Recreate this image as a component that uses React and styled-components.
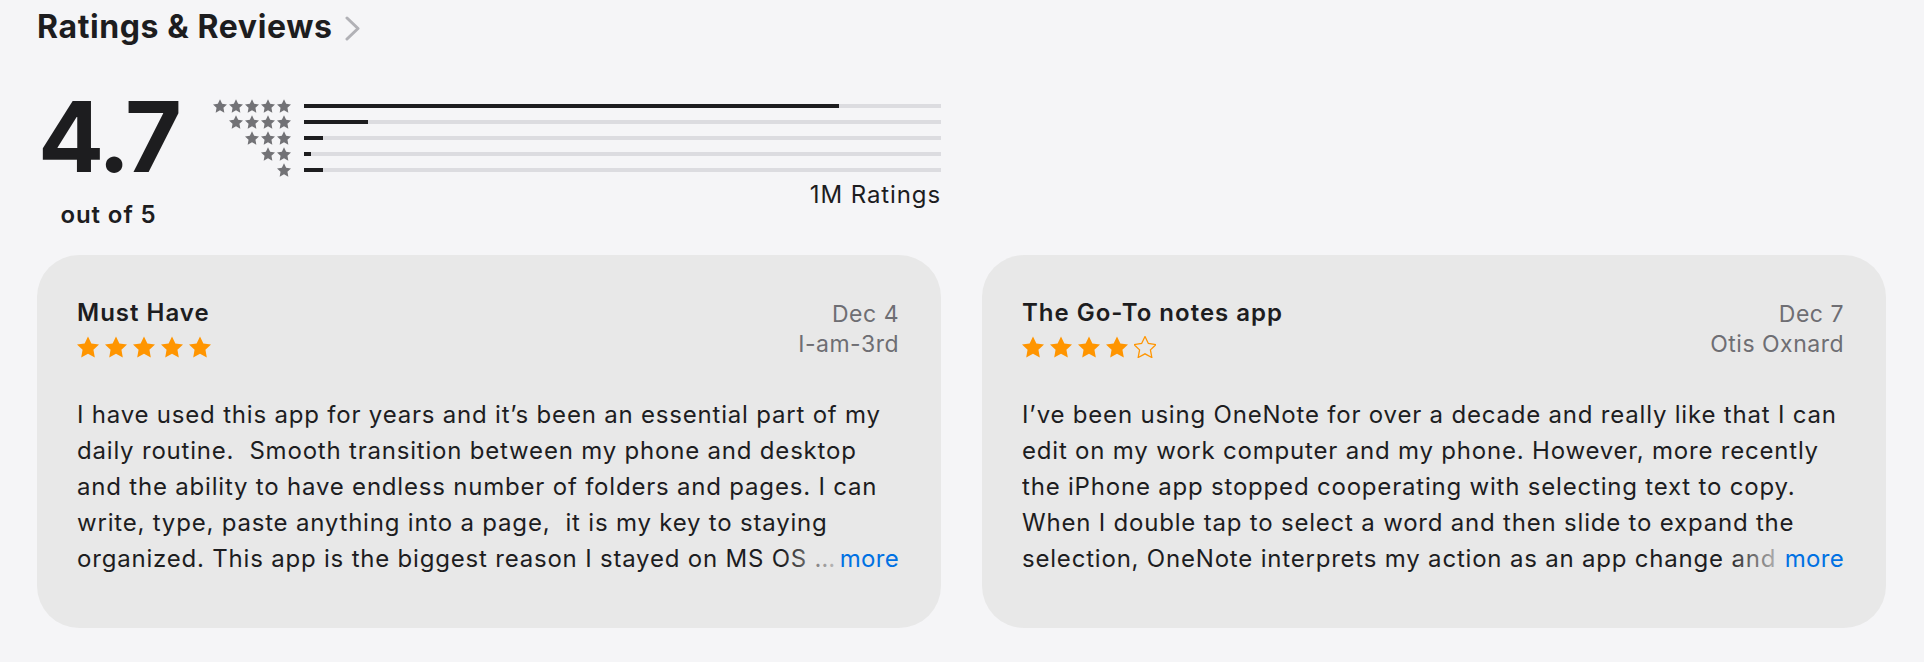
import React from "react";
import styled, { createGlobalStyle } from "styled-components";

const GlobalStyle = createGlobalStyle`
  html, body {
    margin: 0;
    padding: 0;
    background: #f5f5f7;
  }
  body {
    font-family: Inter, "Liberation Sans", sans-serif;
    color: #1d1d1f;
    -webkit-font-smoothing: antialiased;
  }
`;

const CARD_BG = "#e8e8e8";

const STAR_PATH =
  "M12 .587l3.668 7.568 8.332 1.151-6.064 5.828 1.48 8.279L12 19.446l-7.416 3.967 1.48-8.279L0 9.306l8.332-1.151z";

const Page = styled.main`
  width: 1849px;
  padding: 9px 38px 40px 37px;
`;

const Header = styled.header`
  display: flex;
  align-items: center;
  gap: 13px;
  height: 36px;
`;

const Title = styled.h2`
  margin: 0;
  font-size: 32px;
  line-height: 36px;
  font-weight: 700;
  letter-spacing: 0.6px;
`;

const Chevron = styled.svg`
  width: 15px;
  height: 25px;
  margin-top: 2px;
`;

const Columns = styled.div`
  display: grid;
  grid-template-columns: 1fr 1fr;
  column-gap: 41px;
`;

const Summary = styled.section`
  display: flex;
  align-items: flex-start;
  margin-top: 43px;
`;

const Score = styled.div`
  width: 143px;
  display: flex;
  flex-direction: column;
  align-items: center;
`;

const ScoreValue = styled.div`
  font-size: 98px;
  line-height: 98px;
  font-weight: 700;
  letter-spacing: -3px;
`;

const ScoreCaption = styled.div`
  margin-top: 16px;
  font-size: 24px;
  line-height: 26px;
  font-weight: 600;
  letter-spacing: 0.9px;
`;

const Histogram = styled.div`
  flex: 1;
  margin-left: 32px;
  padding-top: 10px;
  display: flex;
  flex-direction: column;
`;

const HistRow = styled.div`
  display: grid;
  grid-template-columns: 79px 1fr;
  column-gap: 13px;
  align-items: center;
  height: 16px;
`;

const HistStars = styled.div`
  display: flex;
  justify-content: flex-end;
  gap: 2px;
`;

const HistStar = styled.svg`
  width: 14px;
  height: 14px;
  fill: #727276;
`;

const Track = styled.div`
  height: 4px;
  background: #dcdce0;
`;

const Fill = styled.div`
  height: 100%;
  background: #1d1d1f;
`;

const RatingCount = styled.div`
  margin-top: 4px;
  text-align: right;
  font-size: 24px;
  line-height: 26px;
  letter-spacing: 0.9px;
  color: #1d1d1f;
`;

const Cards = styled(Columns)`
  margin-top: 27px;
`;

const Card = styled.article`
  background: ${CARD_BG};
  border-radius: 42px;
  padding: 43px 42px 51px 40px;
`;

const CardHead = styled.div`
  display: flex;
  justify-content: space-between;
  align-items: flex-start;
`;

const ReviewTitle = styled.h3`
  margin: 0;
  font-size: 24px;
  line-height: 29px;
  font-weight: 600;
  letter-spacing: 1px;
`;

const Stars = styled.div`
  display: flex;
  gap: 6px;
  margin-top: 9px;
`;

const Star = styled.svg`
  width: 22px;
  height: 22px;
  fill: ${(p) => (p.$filled ? "#ff9500" : "none")};
  stroke: #ff9500;
  stroke-width: ${(p) => (p.$filled ? 0 : 1.4)};
`;

const Meta = styled.div`
  margin-top: 1px;
  text-align: right;
  font-size: 23px;
  line-height: 30px;
  letter-spacing: 0.5px;
  color: #6e6e73;
`;

const Body = styled.div`
  position: relative;
  margin-top: 38px;
  max-height: 180px;
  overflow: hidden;
`;

const BodyText = styled.p`
  margin: 0;
  font-size: 24px;
  line-height: 36px;
  white-space: pre-wrap;
  letter-spacing: 0.8px;
`;

/* "more" link sits on the last line; a fade to its left dims the text end */
const More = styled.button`
  position: absolute;
  right: 0;
  bottom: 0;
  border: 0;
  margin: 0;
  padding: 0;
  font: inherit;
  font-size: 24px;
  line-height: 36px;
  letter-spacing: 0.3px;
  color: #0071e3;
  cursor: pointer;
  background: ${CARD_BG};

  &::before {
    content: "";
    position: absolute;
    top: 0;
    bottom: 0;
    right: 100%;
    width: 58px;
    background: linear-gradient(
      to right,
      rgba(232, 232, 232, 0) 0,
      rgba(232, 232, 232, 0.85) 100%
    );
    pointer-events: none;
  }
`;

const histogram = [
  { stars: 5, share: 0.84 },
  { stars: 4, share: 0.1 },
  { stars: 3, share: 0.03 },
  { stars: 2, share: 0.011 },
  { stars: 1, share: 0.03 },
];

const reviews = [
  {
    title: "Must Have",
    rating: 5,
    date: "Dec 4",
    author: "I-am-3rd",
    text:
      "I have used this app for years and it\u2019s been an essential part of my daily routine.  Smooth transition between my phone and desktop and the ability to have endless number of folders and pages. I can write, type, paste anything into a page,  it is my key to staying organized. This app is the biggest reason I stayed on MS OS \u2026",
  },
  {
    title: "The Go-To notes app",
    rating: 4,
    date: "Dec 7",
    author: "Otis Oxnard",
    text:
      "I\u2019ve been using OneNote for over a decade and really like that I can edit on my work computer and my phone. However, more recently the iPhone app stopped cooperating with selecting text to copy. When I double tap to select a word and then slide to expand the selection, OneNote interprets my action as an app change and",
  },
];

function StarIcon({ as: Comp = Star, filled = true }) {
  return (
    <Comp viewBox="0 0 24 24" $filled={filled}>
      <path d={STAR_PATH} />
    </Comp>
  );
}

function ReviewCard({ review }) {
  return (
    <Card>
      <CardHead>
        <div>
          <ReviewTitle>{review.title}</ReviewTitle>
          <Stars>
            {[1, 2, 3, 4, 5].map((n) => (
              <StarIcon key={n} filled={n <= review.rating} />
            ))}
          </Stars>
        </div>
        <Meta>
          <div>{review.date}</div>
          <div>{review.author}</div>
        </Meta>
      </CardHead>
      <Body>
        <BodyText>{review.text}</BodyText>
        <More type="button">more</More>
      </Body>
    </Card>
  );
}

export default function App() {
  return (
    <>
      <GlobalStyle />
      <Page>
        <Header>
          <Title>Ratings &amp; Reviews</Title>
          <Chevron viewBox="0 0 15 25">
            <path
              d="M2 2l11 10.5L2 23"
              fill="none"
              stroke="#b1b1b6"
              strokeWidth="3"
              strokeLinecap="round"
              strokeLinejoin="round"
            />
          </Chevron>
        </Header>
        <Columns>
          <Summary>
            <Score>
              <ScoreValue>4.7</ScoreValue>
              <ScoreCaption>out of 5</ScoreCaption>
            </Score>
            <Histogram>
              {histogram.map((row) => (
                <HistRow key={row.stars}>
                  <HistStars>
                    {Array.from({ length: row.stars }).map((_, i) => (
                      <StarIcon key={i} as={HistStar} />
                    ))}
                  </HistStars>
                  <Track>
                    <Fill style={{ width: `${row.share * 100}%` }} />
                  </Track>
                </HistRow>
              ))}
              <RatingCount>1M Ratings</RatingCount>
            </Histogram>
          </Summary>
        </Columns>
        <Cards>
          {reviews.map((r) => (
            <ReviewCard key={r.title} review={r} />
          ))}
        </Cards>
      </Page>
    </>
  );
}
